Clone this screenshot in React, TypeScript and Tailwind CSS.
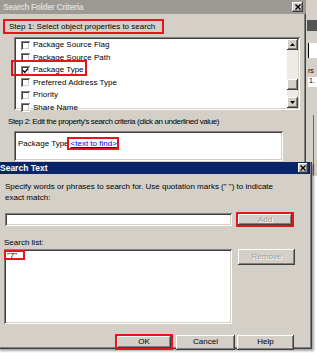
import React from 'react';

const raised =
  'bg-[#d4d0c8] shadow-[inset_-1px_-1px_#404040,inset_1px_1px_#ffffff,inset_-2px_-2px_#808080,inset_2px_2px_#d4d0c8]';
const sunken =
  'bg-white shadow-[inset_1px_1px_#808080,inset_-1px_-1px_#ffffff,inset_2px_2px_#404040,inset_-2px_-2px_#d4d0c8]';

function CloseBox({ className = '' }: { className?: string }) {
  return (
    <div className={`${raised} flex items-center justify-center ${className}`}>
      <svg width="6" height="6" viewBox="0 0 6 6">
        <path d="M0.5 0.5L5.5 5.5M5.5 0.5L0.5 5.5" stroke="#000" strokeWidth="1.4" />
      </svg>
    </div>
  );
}

function Check({ checked }: { checked?: boolean }) {
  return (
    <div className={`${sunken} w-[9px] h-[9px] flex items-center justify-center shrink-0`}>
      {checked && (
        <svg width="7" height="7" viewBox="0 0 7 7">
          <path d="M1 3.5L2.8 5.3L6 1.5" stroke="#000" strokeWidth="1.3" fill="none" />
        </svg>
      )}
    </div>
  );
}

function Arrow({ up }: { up?: boolean }) {
  return (
    <div className={`${raised} w-[11px] h-[11px] flex items-center justify-center`}>
      <svg width="5" height="3" viewBox="0 0 5 3">
        <path d={up ? 'M0 3L2.5 0L5 3Z' : 'M0 0L2.5 3L5 0Z'} fill="#000" />
      </svg>
    </div>
  );
}

function Btn({ label, disabled, className = '' }: { label: string; disabled?: boolean; className?: string }) {
  return (
    <div
      className={`${raised} flex items-center justify-center text-[8px] ${
        disabled ? 'text-[#a09c98] [text-shadow:1px_1px_#ffffff]' : 'text-black'
      } ${className}`}
    >
      {label}
    </div>
  );
}

export default function App() {
  const items = [
    { label: 'Package Source Flag' },
    { label: 'Package Source Path' },
    { label: 'Package Type', checked: true },
    { label: 'Preferred Address Type' },
    { label: 'Priority' },
    { label: 'Share Name' },
  ];

  return (
    <div
      className="relative w-[317px] h-[353px] bg-white overflow-hidden text-black leading-none"
      style={{ fontFamily: '"Liberation Sans", Arial, sans-serif' }}
    >
      {/* window behind, on the right */}
      <div className="absolute left-[305px] top-0 w-[12px] h-[176px] bg-[#d4d0c8] shadow-[inset_1px_0_#404040]">
        <div className="mt-[20px] ml-[2px] h-[11px] bg-[#555555]" />
        <div className="mt-[12px] ml-[3px] h-[15px] bg-white shadow-[inset_1px_0_#000]" />
        <div className="mt-[9px] ml-[3px] text-[7px] text-black">rs</div>
        <div className="mt-[3px] ml-[3px] h-[10px] bg-white text-[7px] pl-[1px]">1.</div>
        <div className="absolute left-[8px] top-[115px] w-px h-[60px] bg-[#6a6a6a]" />
      </div>

      {/* Search Folder Criteria */}
      <div className="absolute left-0 top-0 w-[306px] h-[176px] bg-[#d4d0c8] shadow-[inset_-1px_0_#404040,inset_-2px_0_#808080]">
        <div className="h-[14px] bg-[#9d9a96] flex items-center justify-between pl-[3px] pr-[3px]">
          <span className="text-[8.5px] font-bold tracking-[-0.4px] text-[#dcdad6]">Search Folder Criteria</span>
          <CloseBox className="w-[11px] h-[10px]" />
        </div>

        <div className="mt-[5px] ml-[3px] w-[161px] h-[15px] border-2 border-[#e8141c] flex items-center pl-[4px] text-[8px]">
          Step 1: Select object properties to search
        </div>

        <div className={`${sunken} relative mt-[3px] ml-[14px] w-[286px] h-[73px] flex`}>
          <div className="flex-1 pt-[2px] pl-[7px]">
            {items.map((it) => (
              <div key={it.label} className="h-[12.5px] flex items-center gap-[3px] text-[8px]">
                <Check checked={it.checked} />
                <span>{it.label}</span>
              </div>
            ))}
          </div>
          <div className="w-[11px] my-[2px] mr-[2px] flex flex-col bg-[#eeebe6]">
            <Arrow up />
            <div className="flex-1 relative">
              <div className={`${raised} absolute left-0 top-[29px] w-[11px] h-[11px]`} />
            </div>
            <Arrow />
          </div>
          <div className="absolute left-[-3px] top-[23px] w-[76px] h-[16px] border-2 border-[#e8141c]" />
        </div>

        <div className="mt-[8px] ml-[8px] text-[8px] tracking-[-0.4px]">
          Step 2: Edit the property's search criteria (click an underlined value)
        </div>

        <div className={`${sunken} relative mt-[5px] ml-[14px] w-[269px] h-[30px] flex items-center pl-[4px] pb-[4px] text-[8px]`}>
          <span>Package Type</span>
          <span className="ml-[2px] text-[#0000ff] underline">&lt;text to find&gt;</span>
          <div className="absolute left-[53px] top-[6px] w-[52px] h-[13px] border-2 border-[#e8141c]" />
        </div>
      </div>

      {/* Search Text */}
      <div className="absolute left-[-2px] top-[162px] w-[314px] h-[187px] bg-[#d4d0c8] px-[2px] shadow-[inset_-1px_-1px_#404040,inset_-2px_-2px_#808080,2px_2px_2px_rgba(0,0,0,0.35)]">
        <div className="h-[12px] bg-[#0a246a] flex items-center justify-between pr-[2px]">
          <span className="text-[8.5px] font-bold text-white">Search Text</span>
          <CloseBox className="w-[10px] h-[10px]" />
        </div>

        <div className="mt-[7px] ml-[5px] text-[8px] leading-[11px]">
          Specify words or phrases to search for. Use quotation marks (" ") to indicate
          <br />
          exact match:
        </div>

        <div className="mt-[9px] flex items-center">
          <div className={`${sunken} ml-[5px] w-[227px] h-[13px]`} />
          <div className="ml-[4px] w-[58px] h-[15px] border-2 border-[#e8141c]">
            <Btn label="Add" disabled className="w-full h-full" />
          </div>
        </div>

        <div className="mt-[12px] ml-[4px] text-[8px]">Search list:</div>

        <div className="mt-[2px] flex items-start">
          <div className={`${sunken} relative ml-[4px] w-[228px] h-[75px] pt-[3px] pl-[3px] text-[8px]`}>
            "7"
            <div className="absolute left-0 top-[1px] w-[21px] h-[10px] border-2 border-[#e8141c]" />
          </div>
          <Btn label="Remove" disabled className="ml-[6px] w-[57px] h-[16px]" />
        </div>

        <div className="mt-[10px] flex items-center">
          <div className="ml-[115px] w-[58px] h-[16px] border-2 border-[#e8141c]">
            <Btn label="OK" className="w-full h-full" />
          </div>
          <Btn label="Cancel" className="ml-[3px] w-[59px] h-[15px]" />
          <Btn label="Help" className="ml-[2px] w-[57px] h-[15px]" />
        </div>
      </div>
    </div>
  );
}
